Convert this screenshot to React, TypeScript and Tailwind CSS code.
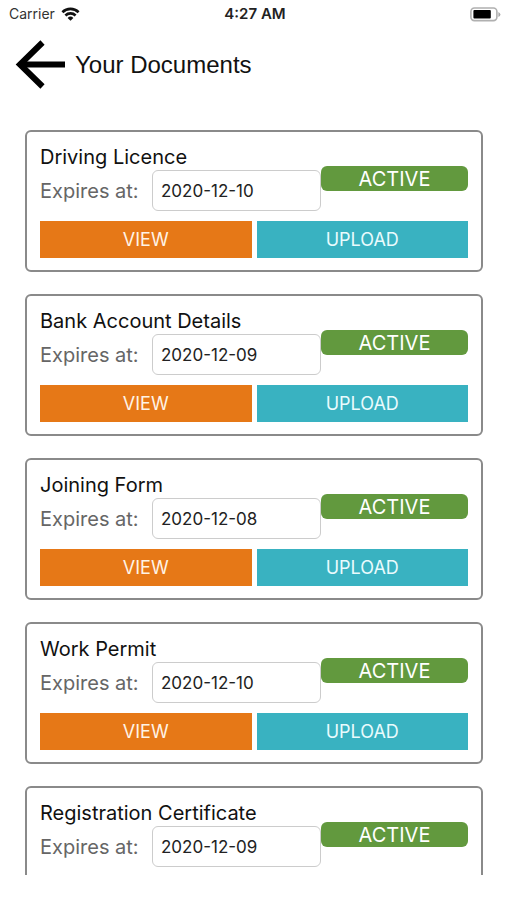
import { useState } from 'react';

type Document = {
    id: string,
    name: string,
    expiresAt: string,
    status: string,
};

const documents: Document[] = [
    { id: 'driving-licence', name: 'Driving Licence', expiresAt: '2020-12-10', status: 'ACTIVE' },
    { id: 'bank-account', name: 'Bank Account Details', expiresAt: '2020-12-09', status: 'ACTIVE' },
    { id: 'joining-form', name: 'Joining Form', expiresAt: '2020-12-08', status: 'ACTIVE' },
    { id: 'work-permit', name: 'Work Permit', expiresAt: '2020-12-10', status: 'ACTIVE' },
    { id: 'registration', name: 'Registration Certificate', expiresAt: '2020-12-09', status: 'ACTIVE' },
];

function StatusBar() {
    return (
        <div className="grid grid-cols-3 items-center h-7 pl-[9px] pr-[6px] text-sm shrink-0">
            <div className="flex items-center gap-[6px] text-[#333]">
                <span>Carrier</span>
                <svg width="19" height="14" viewBox="0 0 18 14" fill="none" stroke="#111" strokeWidth="2.6">
                    <path d="M0.9 5.2a11.6 11.6 0 0 1 16.2 0" />
                    <path d="M3.9 8.5a7.3 7.3 0 0 1 10.2 0" />
                    <path d="M9 13.8L6.1 10.900a4.1 4.1 0 0 1 5.8 0Z" fill="#111" stroke="none" />
                </svg>
            </div>
            <span className="text-center text-[15px] font-semibold text-[#222]">4:27 AM</span>
            <svg className="justify-self-end" width="31" height="15" viewBox="0 0 31 15">
                <rect x="0.9" y="1" width="26" height="12.600" rx="3.5" fill="#fff" stroke="#b0b0b0" strokeWidth="1.6" />
                <rect x="3.4" y="3" width="17.4" height="8.600" rx="1" fill="#000" />
                <path d="M28.4 5v5q2-1 2-2.500t-2-2.500Z" fill="#aaa" />
            </svg>
        </div>
    );
}

function DocumentCard({ document }: { document: Document }) {
    const [expiresAt, setExpiresAt] = useState(document.expiresAt);

    return (
        <div className="border-2 border-[#8a8a8a] rounded-md px-[13px] pt-[13px] pb-3 shrink-0">
            <div className="flex items-start">
                <div className="flex-1 min-w-0">
                    <h2 className="text-xl leading-[25px] text-[#111] whitespace-nowrap">{document.name}</h2>
                    <div className="flex items-center">
                        <label htmlFor={document.id} className="w-28 shrink-0 text-xl text-[#666]">
                            Expires at:
                        </label>
                        <input
                            id={document.id}
                            type="text"
                            className="flex-1 min-w-0 h-[41px] border border-[#ccc] rounded-md px-2 text-[17px] text-[#222]"
                            value={expiresAt}
                            onChange={(e) => setExpiresAt(e.target.value)}
                        />
                    </div>
                </div>
                <span className="w-[147px] h-[25px] mt-[21px] rounded-md bg-[#62993e] text-center text-xl leading-[26px] text-white">
                    {document.status}
                </span>
            </div>
            <div className="flex gap-[5px] mt-[10px]">
                <button className="flex-1 h-[37px] bg-[#e67817] text-lg text-[#fff3e6]">VIEW</button>
                <button className="flex-1 h-[37px] bg-[#39b2c1] text-lg text-[#e9fbfd]">UPLOAD</button>
            </div>
        </div>
    );
}

export default function App() {
    return (
        <div className="h-screen flex flex-col bg-white pb-[25px] font-[Inter,'Liberation_Sans',sans-serif]">
            <StatusBar />
            <header className="flex items-center gap-[10px] h-[74px] pl-[15px] shrink-0">
                <button aria-label="Back">
                    <svg width="50" height="50" viewBox="0 0 50 50" fill="none" stroke="#000" strokeWidth="6">
                        <path d="M27.500 2.500L5 24.500l22.500 22" />
                        <path d="M4 24.500h46" />
                    </svg>
                </button>
                <h1 className="text-2xl text-[#111] font-['Liberation_Sans',Arial,sans-serif]">Your Documents</h1>
            </header>
            <main className="flex-1 min-h-0 overflow-y-auto [scrollbar-width:none] flex flex-col gap-[22px] pl-[25px] pr-6 pt-7">
                {documents.map((document) => (
                    <DocumentCard key={document.id} document={document} />
                ))}
            </main>
        </div>
    );
}
